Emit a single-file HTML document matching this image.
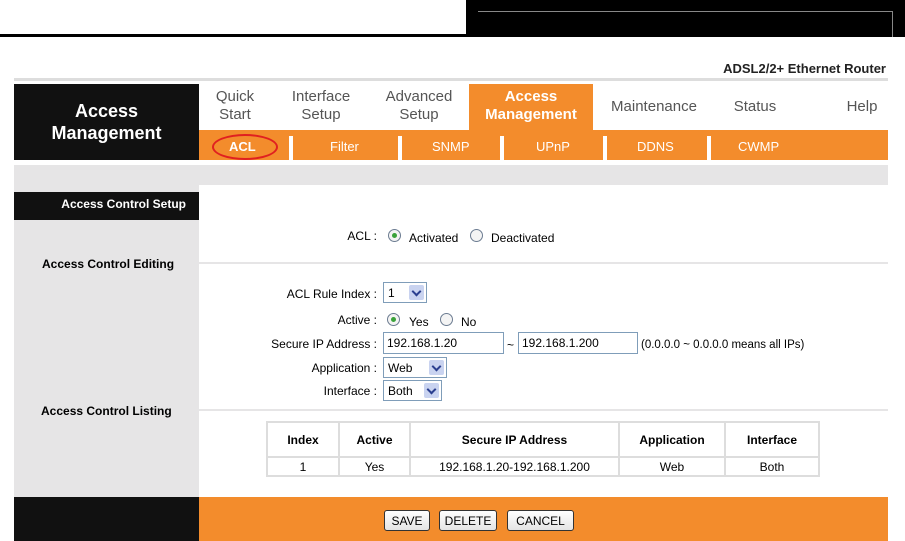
<!DOCTYPE html><html><head><style>
*{margin:0;padding:0;box-sizing:border-box}
body{width:905px;height:541px;background:#fff;font-family:"Liberation Sans",Arial,sans-serif;position:relative;overflow:hidden;font-size:12px}
.a{position:absolute}
.tab{position:absolute;top:88px;text-align:center;font-size:15px;color:#555;line-height:18px}
.sub{position:absolute;top:139px;color:#fff;font-size:13px}
.sep{position:absolute;top:136px;width:4px;height:24px;background:#fff}
.lbl{position:absolute;font-size:12px;color:#000;text-align:right}
.sel{position:absolute;border:1px solid #7f9db9;height:21px;background:#fff;font-size:12px;padding:3px 4px}
.sel i{position:absolute;right:2px;top:2px;width:15px;height:15px;background:#c9d3f0;border-radius:2px}
.sel i:after{content:"";position:absolute;left:4px;top:3px;width:5px;height:5px;border-right:2px solid #2b3f8f;border-bottom:2px solid #2b3f8f;transform:rotate(45deg)}
.rad{position:absolute;width:13px;height:13px;border:1px solid #6c7c91;border-radius:50%;background:#f4f4f4}
.rad.on:after{content:"";position:absolute;left:3px;top:3px;width:5px;height:5px;border-radius:50%;background:#3aa23a}
.inp{position:absolute;border:1px solid #7f9db9;height:22px;font-size:12px;padding:3px}
table{position:absolute;left:266px;top:421px;border-collapse:collapse}
td{border:2px solid #ddd;text-align:center;font-size:12px}
.btn{position:absolute;top:510px;height:21px;border:1px solid #333;border-radius:3px;background:linear-gradient(#fff,#e4e4e4);font-size:12px;padding:3px 0;text-align:center}
</style></head><body>
<div class="a" style="left:0;top:34px;width:466px;height:3px;background:#000"></div>
<div class="a" style="left:466px;top:0;width:439px;height:37px;background:#000"></div>
<div class="a" style="left:478px;top:11px;width:414px;height:1px;background:#888"></div>
<div class="a" style="left:892px;top:11px;width:1px;height:26px;background:#888"></div>
<div class="a" style="right:19px;top:61px;font-size:13px;font-weight:bold;color:#222">ADSL2/2+ Ethernet Router</div>
<div class="a" style="left:14px;top:78px;width:874px;height:3px;background:#ddd"></div>
<div class="a" style="left:14px;top:84px;width:185px;height:76px;background:#111;color:#fff;font-weight:bold;font-size:18px;text-align:center;line-height:22px;padding-top:16px">Access<br>Management</div>
<div class="a" style="left:469px;top:84px;width:124px;height:50px;background:#f38c2c"></div>
<div class="tab" style="left:208px;width:54px">Quick<br>Start</div>
<div class="tab" style="left:282px;width:78px">Interface<br>Setup</div>
<div class="tab" style="left:378px;width:82px">Advanced<br>Setup</div>
<div class="tab" style="left:469px;width:124px;color:#fff;font-weight:bold">Access<br>Management</div>
<div class="tab" style="left:597px;width:114px;top:98px">Maintenance</div>
<div class="tab" style="left:724px;width:62px;top:98px">Status</div>
<div class="tab" style="left:838px;width:48px;top:98px">Help</div>
<div class="a" style="left:199px;top:130px;width:689px;height:30px;background:#f38c2c"></div>
<div class="a" style="left:212px;top:134px;width:66px;height:26px;border:2px solid #e02020;border-radius:50%"></div>
<div class="sub" style="left:229px;font-weight:bold">ACL</div>
<div class="sep" style="left:289px"></div><div class="sub" style="left:330px">Filter</div>
<div class="sep" style="left:398px"></div><div class="sub" style="left:432px">SNMP</div>
<div class="sep" style="left:500px"></div><div class="sub" style="left:536px">UPnP</div>
<div class="sep" style="left:603px"></div><div class="sub" style="left:637px">DDNS</div>
<div class="sep" style="left:707px"></div><div class="sub" style="left:738px">CWMP</div>
<div class="a" style="left:14px;top:165px;width:874px;height:20px;background:#e6e5e6"></div>
<div class="a" style="left:14px;top:185px;width:185px;height:312px;background:#e6e5e6"></div>
<div class="a" style="left:14px;top:192px;width:185px;height:28px;background:#111;color:#fff;font-weight:bold;font-size:12px;text-align:right;padding:5px 13px 0 0">Access Control Setup</div>
<div class="a" style="left:42px;top:257px;font-weight:bold;font-size:12px">Access Control Editing</div>
<div class="a" style="left:41px;top:404px;font-weight:bold;font-size:12px">Access Control Listing</div>
<div class="a" style="left:199px;top:262px;width:689px;height:2px;background:#e6e5e6"></div>
<div class="a" style="left:199px;top:409px;width:689px;height:2px;background:#e6e5e6"></div>
<div class="lbl" style="left:300px;width:77px;top:229px">ACL :</div>
<div class="rad on" style="left:388px;top:229px"></div><div class="a" style="left:409px;top:231px">Activated</div>
<div class="rad" style="left:470px;top:229px"></div><div class="a" style="left:491px;top:231px">Deactivated</div>
<div class="lbl" style="left:250px;width:127px;top:287px">ACL Rule Index :</div>
<div class="sel" style="left:383px;top:282px;width:44px">1<i></i></div>
<div class="lbl" style="left:300px;width:77px;top:313px">Active :</div>
<div class="rad on" style="left:387px;top:313px"></div><div class="a" style="left:409px;top:315px">Yes</div>
<div class="rad" style="left:440px;top:313px"></div><div class="a" style="left:461px;top:315px">No</div>
<div class="lbl" style="left:230px;width:147px;top:337px">Secure IP Address :</div>
<div class="inp" style="left:383px;top:332px;width:121px">192.168.1.20</div>
<div class="a" style="left:507px;top:338px">~</div>
<div class="inp" style="left:518px;top:332px;width:120px">192.168.1.200</div>
<div class="a" style="left:641px;top:339px;font-size:11.5px">(0.0.0.0 ~ 0.0.0.0 means all IPs)</div>
<div class="lbl" style="left:280px;width:97px;top:361px">Application :</div>
<div class="sel" style="left:383px;top:357px;width:64px">Web<i></i></div>
<div class="lbl" style="left:280px;width:97px;top:384px">Interface :</div>
<div class="sel" style="left:383px;top:380px;width:59px">Both<i></i></div>
<table><tr style="height:35px"><td style="width:72px;font-weight:bold">Index</td><td style="width:71px;font-weight:bold">Active</td><td style="width:209px;font-weight:bold">Secure IP Address</td><td style="width:106px;font-weight:bold">Application</td><td style="width:94px;font-weight:bold">Interface</td></tr>
<tr style="height:19px"><td>1</td><td>Yes</td><td>192.168.1.20-192.168.1.200</td><td>Web</td><td>Both</td></tr></table>
<div class="a" style="left:14px;top:497px;width:185px;height:44px;background:#111"></div>
<div class="a" style="left:199px;top:497px;width:689px;height:44px;background:#f38c2c"></div>
<div class="btn" style="left:384px;width:46px">SAVE</div>
<div class="btn" style="left:439px;width:58px">DELETE</div>
<div class="btn" style="left:507px;width:67px">CANCEL</div>
</body></html>
